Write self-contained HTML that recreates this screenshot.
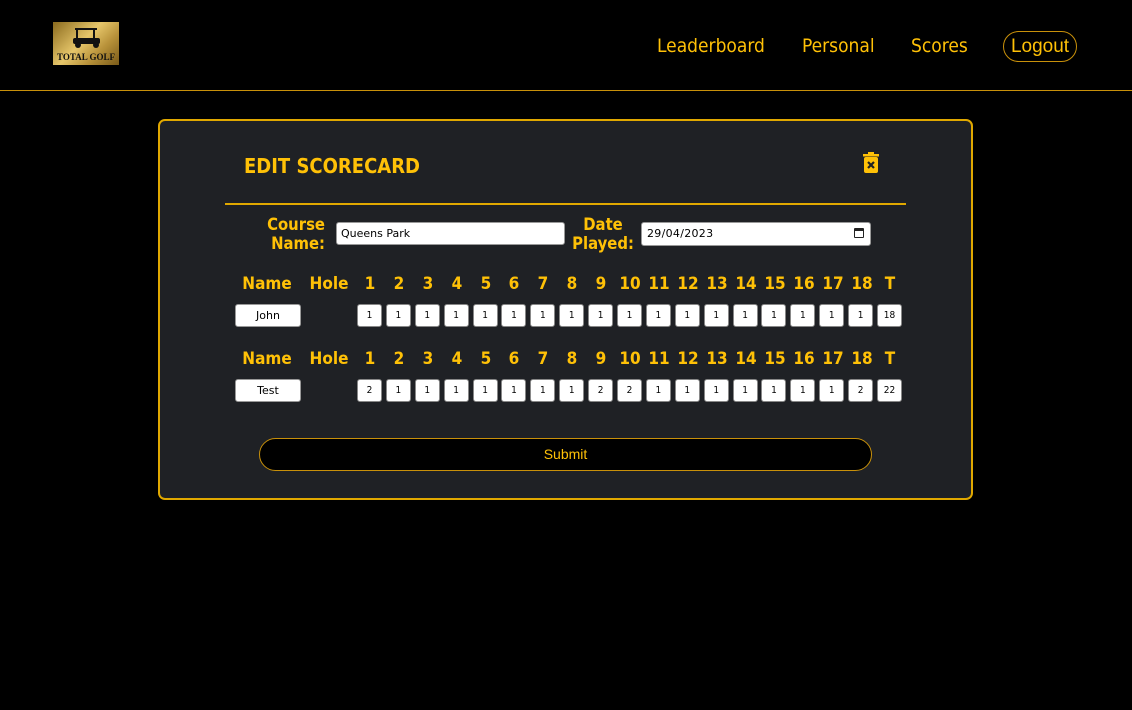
<!DOCTYPE html>
<html><head><style>
*{margin:0;padding:0;box-sizing:border-box}
body{width:1132px;height:710px;background:#000;position:relative;overflow:hidden;font-family:"DejaVu Sans Condensed","DejaVu Sans","Liberation Sans",sans-serif;color:#ffc107}
.a{position:absolute}
.nav{font-size:19px;top:35px}
.card{left:158px;top:119px;width:815px;height:381px;background:#1f2125;border:2px solid #e0a800;border-radius:7px}
.lbl{font-weight:bold;font-size:16.5px;text-align:center;line-height:19px}
.inp{background:#fff;border:1px solid #999;border-radius:3px;color:#000;font-size:11px;font-family:"DejaVu Sans",sans-serif}
.row{display:flex;position:absolute;left:357px}
.row div{width:25px;height:23px;margin-right:3.9px;background:#fff;border:1px solid #888;border-radius:3px;color:#000;font-size:10px;text-align:center;line-height:21px}
.hd{position:absolute;font-weight:bold;font-size:17px;width:30px;text-align:center;margin-left:-15px}
</style></head><body>
<div class="a" style="left:53px;top:22px;width:66px;height:43px;background:linear-gradient(135deg,#8a6a1e,#e6c66a 45%,#b8923a 70%,#7a5a18)">
<svg width="66" height="43" style="position:absolute;left:0;top:0"><g fill="#111"><rect x="22" y="6" width="22" height="2"/><rect x="23" y="7" width="2" height="10"/><rect x="40" y="7" width="2" height="10"/><rect x="20" y="16" width="27" height="6" rx="2"/><circle cx="25" cy="23" r="3"/><circle cx="43" cy="23" r="3"/></g><text x="33" y="38" font-size="9" font-family="Liberation Serif" font-weight="bold" text-anchor="middle" fill="#111">TOTAL GOLF</text></svg></div>
<div class="a nav" style="left:657px">Leaderboard</div>
<div class="a nav" style="left:802px">Personal</div>
<div class="a nav" style="left:911px">Scores</div>
<div class="a" style="left:1003px;top:31px;width:74px;height:31px;border:1px solid #c8900a;border-radius:16px;font-family:'Liberation Sans',sans-serif;font-size:19px;text-align:center;line-height:29px">Logout</div>
<div class="a" style="left:0;top:90px;width:1132px;height:1px;background:#c8900a"></div>
<div class="a card"></div>
<div class="a" style="left:244px;top:154px;font-weight:bold;font-size:20px">EDIT SCORECARD</div>
<svg class="a" style="left:863px;top:152px" width="16" height="21" viewBox="0 0 16 21"><rect x="0" y="2" width="16" height="2.5" fill="#ffc107"/><rect x="5" y="0" width="6" height="3" fill="#ffc107"/><rect x="1" y="5" width="14" height="16" rx="2" fill="#ffc107"/><path d="M5 10l6 6M11 10l-6 6" stroke="#1f2125" stroke-width="2.2"/></svg>
<div class="a" style="left:225px;top:203px;width:681px;height:2px;background:#e0a800"></div>
<div class="a lbl" style="left:257px;top:215px;width:68px;text-align:right">Course<br>Name:</div>
<div class="a inp" style="left:336px;top:222px;width:229px;height:23px;padding:4px 4px">Queens Park</div>
<div class="a lbl" style="left:571px;top:215px;width:64px">Date<br>Played:</div>
<div class="a inp" style="left:641px;top:222px;width:230px;height:24px;padding:4px 5px;letter-spacing:.3px">29/04/2023<span style="position:absolute;right:6px;top:5px;width:10px;height:10px;border:1.5px solid #222;border-top-width:3px;border-radius:1px"></span></div>

<div class="hd" style="left:267px;top:274px;width:60px;margin-left:-30px">Name</div>
<div class="hd" style="left:329px;top:274px;width:50px;margin-left:-25px">Hole</div>
<div class="a inp" style="left:235px;top:304px;width:66px;height:23px;text-align:center;line-height:21px">John</div>
<div class="row" style="top:304px"><div>1</div><div>1</div><div>1</div><div>1</div><div>1</div><div>1</div><div>1</div><div>1</div><div>1</div><div>1</div><div>1</div><div>1</div><div>1</div><div>1</div><div>1</div><div>1</div><div>1</div><div>1</div><div>18</div></div>

<div class="hd" style="left:267px;top:349px;width:60px;margin-left:-30px">Name</div>
<div class="hd" style="left:329px;top:349px;width:50px;margin-left:-25px">Hole</div>
<div class="a inp" style="left:235px;top:379px;width:66px;height:23px;text-align:center;line-height:21px">Test</div>
<div class="row" style="top:379px"><div>2</div><div>1</div><div>1</div><div>1</div><div>1</div><div>1</div><div>1</div><div>1</div><div>2</div><div>2</div><div>1</div><div>1</div><div>1</div><div>1</div><div>1</div><div>1</div><div>1</div><div>2</div><div>22</div></div>

<div id="h1"></div>
<div class="a" style="left:259px;top:438px;width:613px;height:33px;background:#000;border:1px solid #c8900a;border-radius:17px;font-family:'Liberation Sans',sans-serif;font-size:14px;text-align:center;line-height:31px">Submit</div>
<script>
var c=[370,399,428,457,486,514,543,572,601,630,659,688,717,746,775,804,833,862,890];
var t=['1','2','3','4','5','6','7','8','9','10','11','12','13','14','15','16','17','18','T'];
var h='';[274,349].forEach(function(y){c.forEach(function(x,i){h+='<div class="hd" style="left:'+x+'px;top:'+y+'px">'+t[i]+'</div>';});});
document.getElementById('h1').innerHTML=h;
</script>
</body></html>
